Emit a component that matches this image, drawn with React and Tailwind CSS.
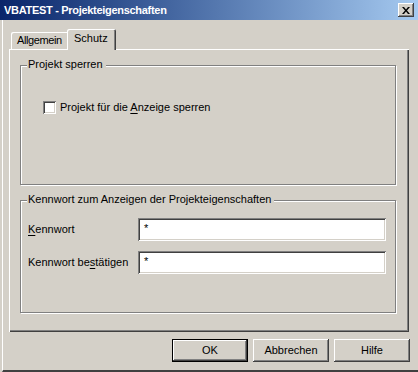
import React from "react";

const raised = "shadow-[inset_-1px_-1px_0_#404040,inset_1px_1px_0_#ffffff,inset_-2px_-2px_0_#808080]";
const sunken = "shadow-[inset_1px_1px_0_#808080,inset_-1px_-1px_0_#ffffff,inset_2px_2px_0_#404040,inset_-2px_-2px_0_#d4d0c8]";

function GroupBox({ title, height, children }) {
    return (
        <div className={`relative ${height} border border-[#808080] shadow-[inset_1px_1px_0_#ffffff,1px_1px_0_#ffffff]`}>
            <span className="absolute left-[6px] top-[-8px] bg-[#d4d0c8] pl-[1px] pr-[3px] leading-[13px]">{title}</span>
            {children}
        </div>
    );
}

function PasswordRow({ label }) {
    return (
        <div className="flex items-center">
            <span className="w-[110px] leading-[13px]">{label}</span>
            <div className={`w-[248px] h-[23px] bg-white pl-[6px] pt-[4px] leading-[13px] ${sunken}`}>*</div>
        </div>
    );
}

function Button({ label, isDefault }) {
    if (isDefault) {
        return (
            <div className="w-[76px] h-[23px] border border-black">
                <div className={`w-full h-full flex items-center justify-center ${raised}`}>{label}</div>
            </div>
        );
    }
    return <div className={`w-[76px] h-[23px] flex items-center justify-center ${raised}`}>{label}</div>;
}

export default function App() {
    return (
        <div className="w-[418px] h-[372px] bg-[#d4d0c8] flex flex-col text-[11px] text-black font-['Liberation_Sans',Arial,sans-serif] overflow-hidden">
            <div className="h-[20px] flex items-center justify-between bg-linear-to-r from-[#0a246a] to-[#a6caf0] pl-[4px] pr-[4px]">
                <span className="text-white font-bold leading-[13px] tracking-[-0.3px]">VBATEST - Projekteigenschaften</span>
                <div className={`w-[16px] h-[14px] bg-[#d4d0c8] flex items-center justify-center ${raised}`}>
                    <svg width="8" height="7" viewBox="0 0 8 7" className="mr-[1px]">
                        <path d="M0 0h2l2 2.4L6 0h2L5 3.5 8 7H6L4 4.6 2 7H0l3-3.5z" fill="#000" />
                    </svg>
                </div>
            </div>

            <div className="flex-1 flex flex-col ml-[2px] border-l border-white border-b-2 border-b-[#404040]">
                <div className="flex items-end pl-[8px] mt-[9px] h-[20px]">
                    <div className="w-[56px] h-[17px] pl-[6px] pt-[2px] leading-[13px] tracking-[-0.4px] rounded-tl-[2px] shadow-[inset_1px_1px_0_#ffffff]">
                        Allgemein
                    </div>
                    <div className="relative z-10 w-[49px] h-[21px] -mb-px bg-[#d4d0c8] pl-[7px] pt-[3px] leading-[13px] rounded-t-[2px] shadow-[inset_1px_1px_0_#ffffff,inset_-1px_0_0_#404040,inset_-2px_0_0_#808080]">
                        Schutz
                    </div>
                </div>

                <div className="ml-[6px] w-[400px] h-[283px] flex flex-col pt-[16px] pl-[11px] shadow-[inset_1px_1px_0_#ffffff,inset_-1px_-1px_0_#404040,inset_-2px_-2px_0_#808080]">
                    <div className="w-[376px]">
                        <GroupBox title="Projekt sperren" height="h-[120px]">
                            <div className="flex items-center gap-[4px] pl-[22px] pt-[35px]">
                                <div className={`w-[13px] h-[13px] bg-white ${sunken}`} />
                                <span className="leading-[13px]">
                                    Projekt für die <span className="underline underline-offset-2">A</span>nzeige sperren
                                </span>
                            </div>
                        </GroupBox>
                    </div>
                    <div className="w-[376px] mt-[15px]">
                        <GroupBox title="Kennwort zum Anzeigen der Projekteigenschaften" height="h-[113px]">
                            <div className="flex flex-col gap-[10px] pl-[7px] pt-[17px]">
                                <PasswordRow label={<><span className="underline underline-offset-2">K</span>ennwort</>} />
                                <PasswordRow label={<>Kennwort be<span className="underline underline-offset-2">s</span>tätigen</>} />
                            </div>
                        </GroupBox>
                    </div>
                </div>

                <div className="flex justify-end gap-[5px] pr-[8px] mt-[7px]">
                    <Button label="OK" isDefault />
                    <Button label="Abbrechen" />
                    <Button label="Hilfe" />
                </div>
            </div>
        </div>
    );
}
